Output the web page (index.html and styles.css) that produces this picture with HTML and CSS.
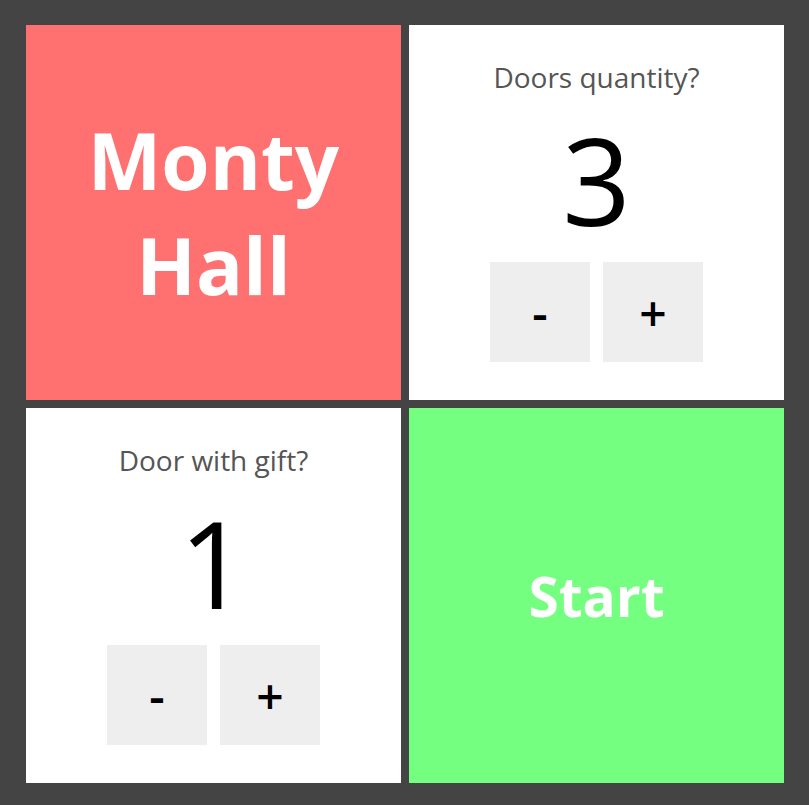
FILE: index.html
```html
<!DOCTYPE html>
<html>
<head>
<meta charset="utf-8">
<link rel="stylesheet" href="styles.css">
</head>
<body>
<div class="board">
  <div class="card title"><h1>Monty<br>Hall</h1></div>
  <div class="card picker">
    <div class="label">Doors quantity?</div>
    <div class="value">3</div>
    <div class="buttons"><button class="btn">-</button><button class="btn">+</button></div>
  </div>
  <div class="card picker">
    <div class="label">Door with gift?</div>
    <div class="value">1</div>
    <div class="buttons"><button class="btn">-</button><button class="btn">+</button></div>
  </div>
  <div class="card start"><span>Start</span></div>
</div>
</body>
</html>
```

FILE: styles.css
```css
html, body {
  margin: 0;
  padding: 0;
  background: #444444;
  font-family: "Open Sans", "Noto Sans", sans-serif;
}
.board {
  display: grid;
  grid-template-columns: 375px 375px;
  grid-template-rows: 375px 375px;
  gap: 8px;
  padding: 25px 0 0 26px;
}
.card {
  display: flex;
  flex-direction: column;
  align-items: center;
  justify-content: center;
  background: #ffffff;
}
.title {
  background: #ff7070;
}
.title h1 {
  margin: 0;
  color: #ffffff;
  font-size: 78px;
  line-height: 105px;
  font-weight: 700;
  text-align: center;
}
.start {
  background: #75ff80;
  color: #ffffff;
  font-size: 55px;
  font-weight: 700;
}
.picker {
  justify-content: flex-start;
  padding-top: 33px;
}
.label {
  color: #555555;
  font-size: 28px;
  line-height: 38px;
}
.value {
  color: #000000;
  font-size: 120px;
  line-height: 150px;
  margin-top: 9px;
}
.buttons {
  display: flex;
  gap: 13px;
  margin-top: 7px;
}
.btn {
  width: 100px;
  height: 100px;
  border: none;
  background: #eeeeee;
  font-family: "Open Sans", "Noto Sans", sans-serif;
  font-size: 48px;
  font-weight: 600;
  color: #000000;
  padding: 0;
}
```
